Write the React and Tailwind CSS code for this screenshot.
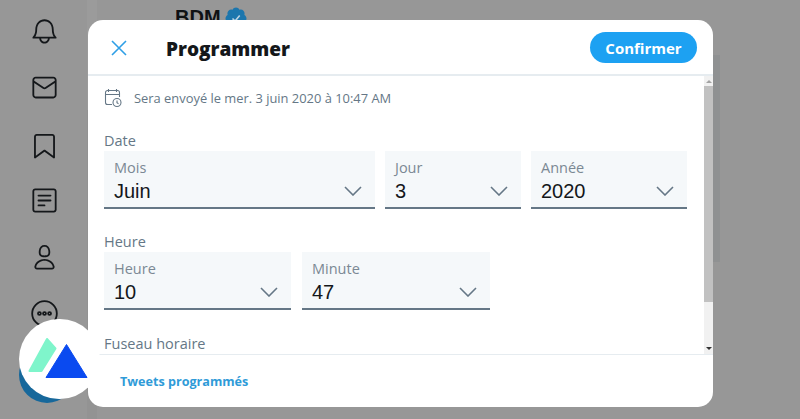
import React from "react";

const uiFont = "font-['Open_Sans','Noto_Sans',sans-serif]";

const sideIcons = [
  "M21.697 16.468c-.02-.016-2.14-1.64-2.103-6.03.02-2.532-.812-4.782-2.347-6.335C15.872 2.71 14.01 1.94 12.005 1.93h-.013c-2.004.01-3.866.78-5.242 2.174-1.534 1.553-2.368 3.802-2.346 6.334.037 4.33-2.02 5.967-2.102 6.03-.26.193-.366.53-.265.838.102.308.39.515.712.515h4.92c.102 2.31 1.997 4.16 4.33 4.16s4.226-1.85 4.327-4.16h4.922c.322 0 .61-.206.71-.514.103-.307-.003-.645-.263-.838zM12 20.478c-1.505 0-2.73-1.177-2.828-2.658h5.656c-.1 1.48-1.323 2.66-2.828 2.66zM4.38 16.32c.74-1.132 1.548-3.028 1.524-5.896-.018-2.16.644-3.982 1.913-5.267C8.91 4.05 10.397 3.437 12 3.43c1.603.008 3.087.62 4.18 1.728 1.27 1.285 1.933 3.106 1.915 5.267-.024 2.868.785 4.765 1.525 5.896H4.38z",
  "M19.25 3.018H4.75C3.233 3.018 2 4.252 2 5.77v12.495c0 1.518 1.233 2.753 2.75 2.753h14.5c1.517 0 2.75-1.235 2.75-2.753V5.77c0-1.518-1.233-2.752-2.75-2.752zm-14.5 1.5h14.5c.69 0 1.25.56 1.25 1.25v.714l-8.05 5.367c-.273.18-.626.182-.9-.002L3.5 6.482v-.714c0-.69.56-1.25 1.25-1.25zm14.5 14.998H4.75c-.69 0-1.25-.56-1.25-1.25V8.24l7.24 4.83c.383.256.822.384 1.26.384.44 0 .877-.128 1.26-.383l7.24-4.83v10.022c0 .69-.56 1.25-1.25 1.25z",
  "M19.9 23.5c-.157 0-.312-.05-.442-.144L12 17.928l-7.458 5.43c-.228.164-.53.19-.782.06-.25-.127-.41-.385-.41-.667V5.6c0-1.24 1.01-2.25 2.25-2.25h12.798c1.24 0 2.25 1.01 2.25 2.25v17.15c0 .282-.158.54-.41.668-.106.055-.223.082-.34.082zM12 16.25c.155 0 .31.048.44.144l6.71 4.883V5.6c0-.412-.337-.75-.75-.75H5.6c-.413 0-.75.338-.75.75v15.677l6.71-4.883c.13-.096.285-.144.44-.144z",
  "M19.75 22H4.25C3.01 22 2 20.99 2 19.75V4.25C2 3.01 3.01 2 4.25 2h15.5C20.99 2 22 3.01 22 4.25v15.5c0 1.24-1.01 2.25-2.25 2.25zM4.25 3.5c-.414 0-.75.337-.75.75v15.5c0 .413.336.75.75.75h15.5c.414 0 .75-.337.75-.75V4.25c0-.413-.336-.75-.75-.75H4.25zM17 8.64H7c-.414 0-.75-.336-.75-.75s.336-.75.75-.75h10c.414 0 .75.336.75.75s-.336.75-.75.75zm0 4.11H7c-.414 0-.75-.336-.75-.75s.336-.75.75-.75h10c.414 0 .75.336.75.75s-.336.75-.75.75zm-5 4.11H7c-.414 0-.75-.336-.75-.75s.336-.75.75-.75h5c.414 0 .75.336.75.75s-.336.75-.75.75z",
  "M12 11.816c1.355 0 2.872-.15 3.84-1.256.814-.93 1.078-2.368.806-4.392-.38-2.825-2.117-4.512-4.646-4.512S7.734 3.343 7.354 6.17c-.272 2.022-.008 3.46.806 4.39.968 1.107 2.485 1.256 3.84 1.256zM8.84 6.368c.162-1.2.787-3.212 3.16-3.212s2.998 2.013 3.16 3.212c.207 1.55.057 2.627-.45 3.205-.455.52-1.266.743-2.71.743s-2.255-.223-2.71-.743c-.507-.578-.657-1.656-.45-3.205zm11.44 12.868c-.877-3.526-4.282-5.99-8.28-5.99s-7.403 2.464-8.28 5.99c-.172.692-.028 1.4.395 1.94.408.52 1.04.82 1.733.82h12.304c.693 0 1.325-.3 1.733-.82.424-.54.567-1.247.394-1.94zm-1.576 1.016c-.126.16-.316.246-.552.246H5.848c-.235 0-.426-.085-.552-.246-.137-.174-.18-.412-.12-.654.71-2.855 3.517-4.85 6.824-4.85s6.114 1.994 6.824 4.85c.06.242.017.48-.12.654z",
];

function Chevron() {
  return (
    <svg viewBox="0 0 18 10" className="h-[10px] w-[18px] fill-none stroke-[#657786] stroke-[1.6]">
      <path d="M1 1l8 8 8-8" />
    </svg>
  );
}

function SelectField({ label, value, width }) {
  return (
    <div className={`${width} flex h-[58px] flex-col border-b-2 border-[#657786] bg-[#f5f8fa] px-[10px] pt-[6px]`}>
      <span className="text-[14.5px] leading-[21px] text-[#7b8894]">{label}</span>
      <div className="mt-px flex items-center justify-between pr-[3px]">
        <span className="font-['Liberation_Sans',sans-serif] text-[20px] leading-[24px] text-[#14171a]">{value}</span>
        <Chevron />
      </div>
    </div>
  );
}

export default function App() {
  return (
    <div className={`${uiFont} relative flex h-[419px] w-[800px] overflow-hidden bg-[#979797]`}>
      {/* sidebar behind the modal */}
      <div className="flex w-[87px] flex-col items-center pt-[17px] pl-[1px]">
        {sideIcons.map((d, i) => (
          <svg key={i} viewBox="0 0 24 24" className="mb-[27.4px] h-[29px] w-[29px] fill-[#14171a]">
            <path d={d} />
          </svg>
        ))}
        <svg viewBox="0 0 24 24" className="h-[29px] w-[29px] fill-none stroke-[#14171a] stroke-[1.5]">
          <circle cx="12" cy="12" r="10.2" />
          <circle cx="7.8" cy="12" r="1.2" />
          <circle cx="12" cy="12" r="1.2" />
          <circle cx="16.2" cy="12" r="1.2" />
        </svg>
      </div>

      <div className="flex w-[10px] flex-col">
        <div className="h-[110px] bg-[#9b9b9b]" />
        <div className="flex-1 bg-[#939393]" />
      </div>

      <div className="flex h-[24px] flex-1 items-start pl-[78px] pt-[6px]">
        <span className="mt-[1px] font-['Liberation_Sans',sans-serif] text-[20px] leading-[20px] font-bold text-[#0f1114]">BDM</span>
        <svg viewBox="0 0 24 24" className="ml-[3px] h-[24px] w-[24px]">
          <path
            fill="#1c76ad"
            d="M22.5 12.5c0-1.58-.875-2.95-2.148-3.6.154-.435.238-.905.238-1.4 0-2.21-1.71-3.998-3.818-3.998-.47 0-.92.084-1.336.25C14.818 2.415 13.51 1.5 12 1.5s-2.816.917-3.437 2.25c-.415-.165-.866-.25-1.336-.25-2.11 0-3.818 1.79-3.818 4 0 .494.083.964.237 1.4-1.272.65-2.147 2.018-2.147 3.6 0 1.495.782 2.798 1.942 3.486-.02.17-.032.34-.032.514 0 2.21 1.708 4 3.818 4 .47 0 .92-.086 1.335-.25.62 1.334 1.926 2.25 3.437 2.25 1.512 0 2.818-.916 3.437-2.25.415.163.865.248 1.336.248 2.11 0 3.818-1.79 3.818-4 0-.174-.012-.344-.033-.513 1.158-.687 1.943-1.99 1.943-3.484z"
          />
          <path fill="none" stroke="#bcd3e2" strokeWidth="1.6" d="M8.5 12.5l2.6 2.6 4.6-5.6" />
        </svg>
      </div>

      {/* background scrollbar on the right */}
      <div className="mr-[80px] flex w-[7px] flex-col">
        <div className="h-[55px]" />
        <div className="h-[207px] bg-[#8f9192]" />
      </div>

      {/* modal */}
      <div className="absolute top-[20px] left-[88px] flex h-[387px] w-[625px] flex-col overflow-hidden rounded-[15px] bg-white">
        <header className="flex h-[56px] shrink-0 items-center border-b-2 border-[#e6ecf0] pr-[16px] pl-[23px]">
          <svg viewBox="0 0 16 16" className="mt-[1px] h-[16px] w-[16px] fill-none stroke-[#2f9fe6] stroke-[1.6]">
            <path d="M1 1l14 14M15 1L1 15" />
          </svg>
          <h1 className="mt-[4px] ml-[39px] flex-1 text-[19px] leading-[24px] font-extrabold text-[#14171a]">Programmer</h1>
          <button className="flex h-[31px] w-[107px] items-center justify-center rounded-full bg-[#1da1f2] pt-[3px] text-[15px] font-bold text-white">
            Confirmer
          </button>
        </header>

        <div className="flex min-h-0 flex-1">
          <div className="min-h-0 flex-1 overflow-hidden pt-[11px] pl-[16px]">
            <div className="flex h-[21px] items-center">
              <svg viewBox="0 0 18 20" className="h-[20px] w-[18px] fill-none stroke-[#657786] stroke-[1.1]">
                <path d="M8 16.5H3.5A2 2 0 0 1 1.500 14.500V4.500a2 2 0 0 1 2-2h10a2 2 0 0 1 2 2V9M1.500 6.500h14M4.500 1v3M12.500 1v3" />
                <circle cx="13" cy="14.5" r="4" />
                <path d="M13 12.5v2.200l1.500 1" />
              </svg>
              <span className="ml-[12px] text-[12.9px] leading-[18px] text-[#657786]">
                Sera envoyé le mer. 3 juin 2020 à 10:47 AM
              </span>
            </div>

            <div className="mt-[22px] text-[14.5px] leading-[21px] text-[#657786]">Date</div>
            <div className="flex gap-[10px]">
              <SelectField label="Mois" value="Juin" width="w-[271px]" />
              <SelectField label="Jour" value="3" width="w-[136px]" />
              <SelectField label="Année" value="2020" width="w-[156px]" />
            </div>

            <div className="mt-[22px] text-[14.5px] leading-[21px] text-[#657786]">Heure</div>
            <div className="flex gap-[11px]">
              <SelectField label="Heure" value="10" width="w-[187px]" />
              <SelectField label="Minute" value="47" width="w-[188px]" />
            </div>

            <div className="mt-[23px] text-[14.5px] leading-[21px] text-[#657786]">Fuseau horaire</div>
          </div>

          {/* scrollbar */}
          <div className="flex w-[9px] shrink-0 flex-col bg-[#f1f1f1]">
            <div className="flex h-[10px] items-center justify-center">
              <div className="h-0 w-0 border-x-[3px] border-b-[3px] border-x-transparent border-b-[#a3a3a3]" />
            </div>
            <div className="h-[216px] bg-[#c1c1c1]" />
            <div className="flex flex-1 items-end justify-center pb-[4px]">
              <div className="h-0 w-0 border-x-[3px] border-t-[3px] border-x-transparent border-t-[#333]" />
            </div>
          </div>
        </div>

        <footer className="flex h-[53px] shrink-0 items-center border-t border-[#e6ecf0] pt-[3px] pl-[32px]">
          <span className="text-[12.6px] font-bold text-[#2f9bd8]">Tweets programmés</span>
        </footer>
      </div>

      {/* tweet button under the watermark */}
      <div className="absolute top-[347px] left-[19px] h-[56px] w-[56px] rounded-full bg-[#17689b]" />

      {/* watermark logo */}
      <div className="absolute top-[319px] left-[19px] h-[80px] w-[81px] rounded-full bg-white">
        <svg viewBox="0 0 81 80" className="h-full w-full">
          <path fill="#7ff5cb" stroke="#7ff5cb" strokeWidth="2" strokeLinejoin="round" d="M10.500 52L28 20l8.500 9.500L22.500 52z" />
          <path fill="#0a4af0" stroke="#0a4af0" strokeWidth="1" strokeLinejoin="round" d="M47.500 25.500L68 58.500H27z" />
        </svg>
      </div>
    </div>
  );
}
